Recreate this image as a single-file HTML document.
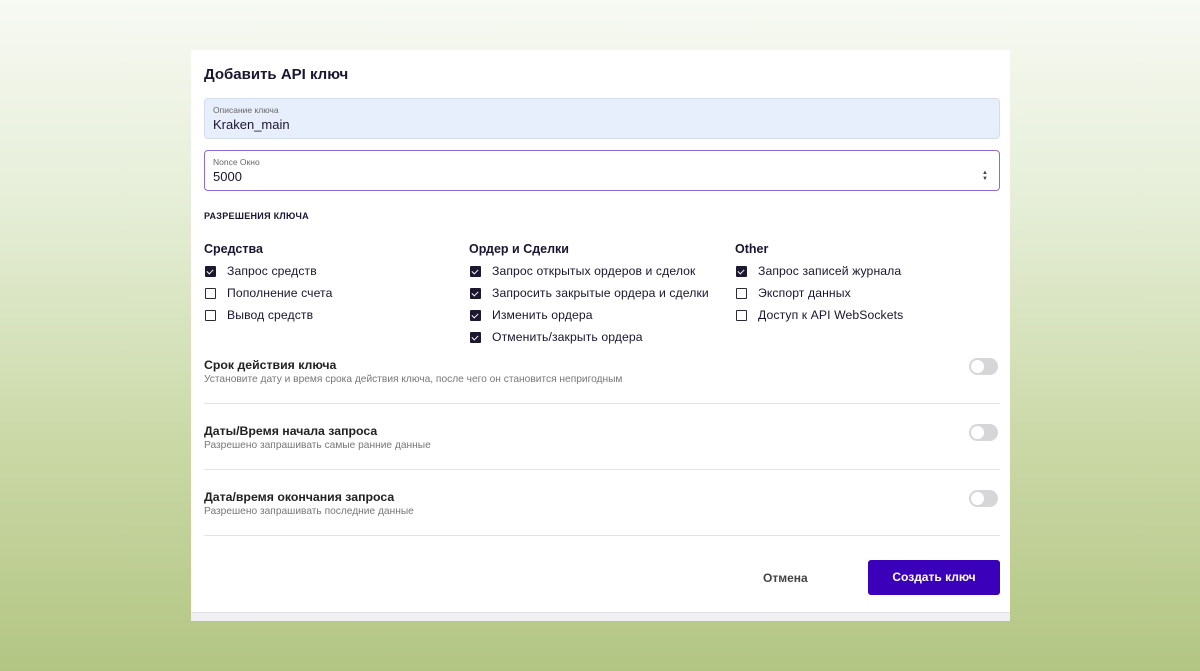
<!DOCTYPE html>
<html><head><meta charset="utf-8"><style>
*{margin:0;padding:0;box-sizing:border-box}
body{width:1200px;height:671px;overflow:hidden;font-family:"Liberation Sans",sans-serif;color:#1a1530;
background:linear-gradient(180deg,#f7f9f3 0%,#e6eed8 30%,#cbd9a8 65%,#b3c583 100%);position:relative}
.card{position:absolute;left:191px;top:50px;width:819px;height:562px;background:#fff}
.strip{position:absolute;left:191px;top:612px;width:819px;height:9px;background:#f0f0f2;border-top:1px solid #e2e2e6}
.a{position:absolute}
h1{position:absolute;left:204px;top:66px;font-size:15px;font-weight:bold}
.in{position:absolute;left:204px;width:796px;height:41px;border-radius:4px}
.lab{position:absolute;left:8px;top:6px;font-size:8.5px;color:#666}
.val{position:absolute;left:8px;top:18px;font-size:13px;color:#1a1530}
.sec{font-size:9px;font-weight:bold;letter-spacing:.3px}
.gh{font-size:12.5px;font-weight:bold}
.cb{position:absolute;font-size:12.2px;padding-left:23px;line-height:14px;letter-spacing:.1px}
.cb:before{content:"";position:absolute;left:1px;top:2px;width:9px;height:9px;border:1.5px solid #2a2a3a;border-radius:1px}
.cb.on:before{background:#1d1830;border-color:#1d1830}
.cb.on:after{content:"";position:absolute;left:4px;top:4px;width:3px;height:5px;border:solid #fff;border-width:0 1.5px 1.5px 0;transform:rotate(45deg)}
.t{font-size:12.3px;font-weight:bold;color:#222}
.s{font-size:10.2px;color:#777}
.tg{position:absolute;left:969px;width:29px;height:17px;border-radius:9px;background:#d6d6d8}
.tg:after{content:"";position:absolute;left:2px;top:2px;width:13px;height:13px;border-radius:50%;background:#fff}
.hr{position:absolute;left:204px;width:796px;height:1px;background:#e4e4e6}
</style></head><body>
<div class="card"></div><div class="strip"></div>
<h1>Добавить API ключ</h1>
<div class="in" style="top:98px;background:#e8effc;border:1px solid #d5dcec"><div class="lab">Описание ключа</div><div class="val">Kraken_main</div></div>
<div class="in" style="top:150px;background:#fff;border:1.5px solid #8c6ad8"><div class="lab">Nonce Окно</div><div class="val">5000</div>
<div class="a" style="right:11px;top:19px;font-size:6px;line-height:6px;color:#444">▲<br>▼</div></div>
<div class="a sec" style="left:204px;top:211px">РАЗРЕШЕНИЯ КЛЮЧА</div>
<div class="a gh" style="left:204px;top:242px">Средства</div>
<div class="a gh" style="left:469px;top:242px">Ордер и Сделки</div>
<div class="a gh" style="left:735px;top:242px">Other</div>
<div class="cb on" style="left:204px;top:264px">Запрос средств</div>
<div class="cb" style="left:204px;top:286px">Пополнение счета</div>
<div class="cb" style="left:204px;top:308px">Вывод средств</div>
<div class="cb on" style="left:469px;top:264px">Запрос открытых ордеров и сделок</div>
<div class="cb on" style="left:469px;top:286px">Запросить закрытые ордера и сделки</div>
<div class="cb on" style="left:469px;top:308px">Изменить ордера</div>
<div class="cb on" style="left:469px;top:330px">Отменить/закрыть ордера</div>
<div class="cb on" style="left:735px;top:264px">Запрос записей журнала</div>
<div class="cb" style="left:735px;top:286px">Экспорт данных</div>
<div class="cb" style="left:735px;top:308px">Доступ к API WebSockets</div>
<div class="a t" style="left:204px;top:358px">Срок действия ключа</div>
<div class="a s" style="left:204px;top:374px">Установите дату и время срока действия ключа, после чего он становится непригодным</div>
<div class="tg" style="top:358px"></div><div class="hr" style="top:403px"></div>
<div class="a t" style="left:204px;top:424px">Даты/Время начала запроса</div>
<div class="a s" style="left:204px;top:440px">Разрешено запрашивать самые ранние данные</div>
<div class="tg" style="top:424px"></div><div class="hr" style="top:469px"></div>
<div class="a t" style="left:204px;top:490px">Дата/время окончания запроса</div>
<div class="a s" style="left:204px;top:506px">Разрешено запрашивать последние данные</div>
<div class="tg" style="top:490px"></div><div class="hr" style="top:535px"></div>
<div class="a" style="left:763px;top:571px;font-size:12px;font-weight:bold;color:#444">Отмена</div>
<div class="a" style="left:868px;top:560px;width:132px;height:35px;background:#3b00b9;border-radius:3px;color:#fff;font-size:12px;font-weight:bold;text-align:center;line-height:35px">Создать ключ</div>
</body></html>
